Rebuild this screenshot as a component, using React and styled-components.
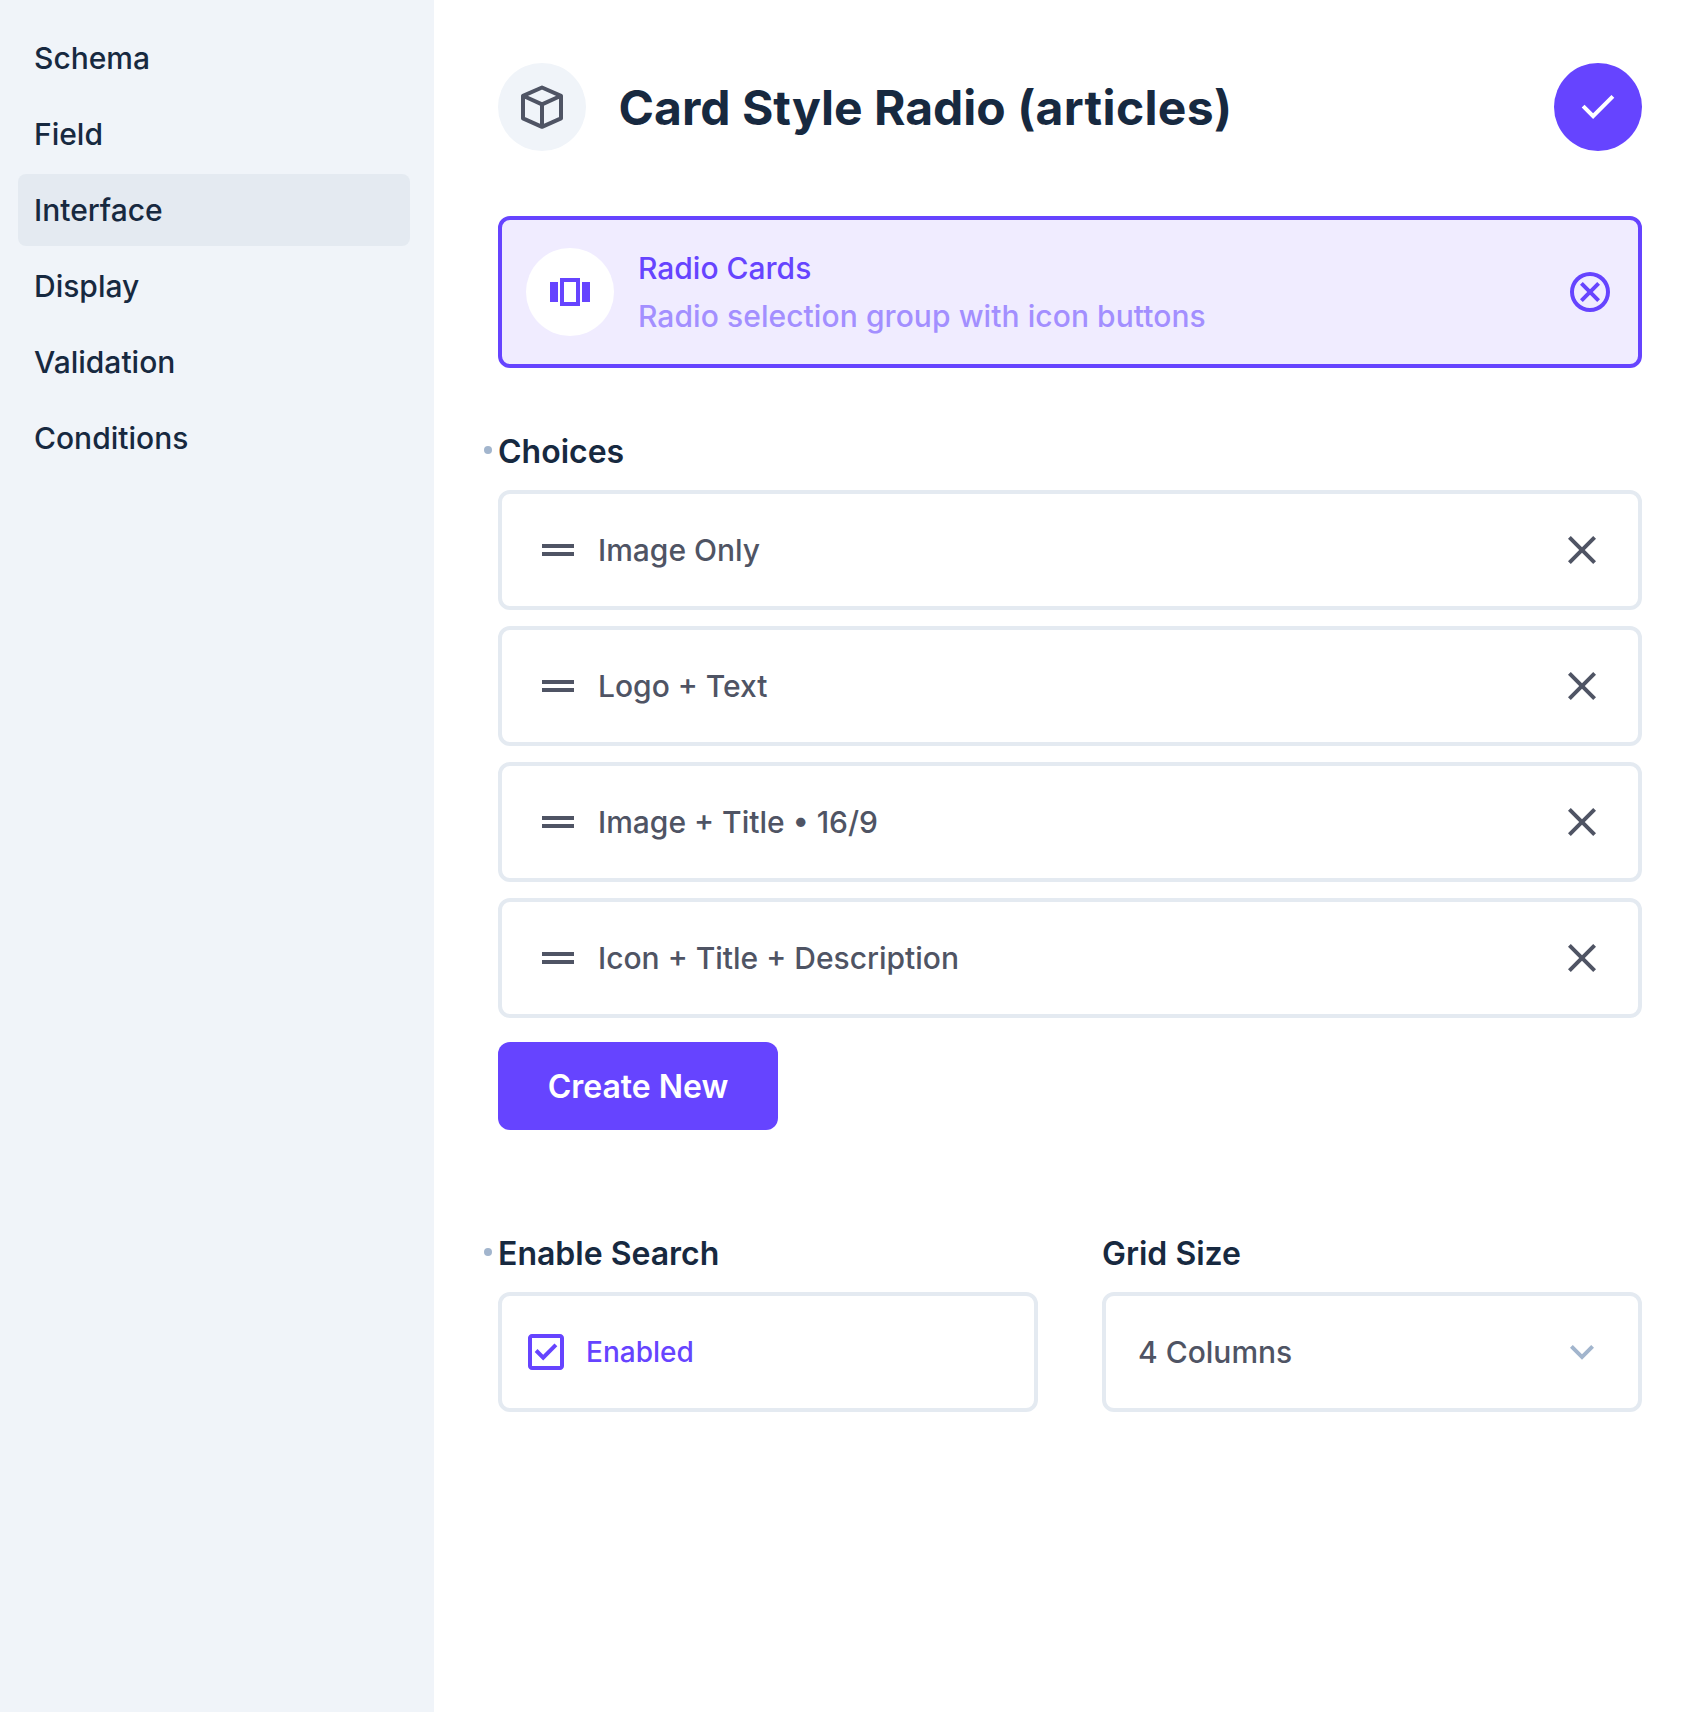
import React from "react";
import styled, { createGlobalStyle } from "styled-components";

const color = {
  primary: "#6644ff",
  primaryTint: "#f0ecff",
  primaryMuted: "#a38fff",
  heading: "#172940",
  text: "#4f5464",
  subtle: "#a2b5cd",
  border: "#e4eaf1",
  navActive: "#e4eaf1",
  panel: "#f0f4f9",
};

const GlobalStyle = createGlobalStyle`
  *, *::before, *::after { box-sizing: border-box; }
  body {
    margin: 0;
    background: #ffffff;
    color: ${color.text};
    font-family: Inter, "Liberation Sans", sans-serif;
    font-size: 30px;
    font-weight: 500;
    -webkit-font-smoothing: antialiased;
  }
`;

const Layout = styled.div`
  display: flex;
  min-height: 1712px;
`;

const Sidebar = styled.nav`
  flex: none;
  width: 434px;
  padding: 22px 24px 22px 18px;
  display: flex;
  flex-direction: column;
  gap: 4px;
  background: ${color.panel};
`;

const NavItem = styled.a`
  display: flex;
  align-items: center;
  height: 72px;
  padding: 0 16px;
  border-radius: 8px;
  color: ${color.heading};
  background: ${(p) => (p.$active ? color.navActive : "transparent")};
`;

const Main = styled.main`
  flex: 1;
  padding: 63px 60px 60px 64px;
`;

const Header = styled.header`
  display: flex;
  align-items: center;
  margin-bottom: 65px;
`;

const Title = styled.h1`
  flex: 1;
  margin: 0 0 0 32.5px;
  padding-top: 2px;
  color: ${color.heading};
  font-size: 48px;
  font-weight: 700;
  line-height: 60px;
`;

const Collection = styled.span`
  letter-spacing: 0.34px;
`;

const Round = styled.span`
  flex: none;
  display: flex;
  align-items: center;
  justify-content: center;
  width: 88px;
  height: 88px;
  border: 0;
  padding: 0;
  border-radius: 50%;
  color: ${(p) => p.$fg};
  background: ${(p) => p.$bg};
`;

const Svg = styled.svg`
  flex: none;
  display: block;
  width: 48px;
  height: 48px;
  fill: currentColor;
`;

const SelectedInterface = styled.section`
  display: flex;
  align-items: center;
  height: 152px;
  padding: 0 24px;
  border: 4px solid ${color.primary};
  border-radius: 12px;
  background: ${color.primaryTint};
  color: ${color.primary};
`;

const InterfaceText = styled.div`
  flex: 1;
  margin-left: 24px;
  line-height: 48px;
`;

const Description = styled.div`
  color: ${color.primaryMuted};
  letter-spacing: 0.07px;
`;

const Field = styled.section`
  margin-top: ${(p) => p.$top || 0}px;
`;

const Label = styled.h2`
  position: relative;
  margin: 0 0 18px;
  color: ${color.heading};
  font-size: 32px;
  font-weight: 600;
  line-height: 40px;
`;

const EditedDot = styled.span`
  position: absolute;
  left: -14px;
  top: 14px;
  width: 8px;
  height: 8px;
  border-radius: 50%;
  background: ${color.subtle};
`;

const ChoiceList = styled.div`
  display: grid;
  gap: 16px;
`;

const Box = styled.div`
  display: flex;
  align-items: center;
  height: 120px;
  padding: 0 32px;
  padding-left: ${(p) => p.$left ?? 32}px;
  border: 4px solid ${color.border};
  border-radius: 12px;
`;

const BoxText = styled.span`
  flex: 1;
  margin-left: ${(p) => p.$gap ?? 0}px;
  font-size: ${(p) => p.$size ?? 30}px;
`;

const Tinted = styled.span`
  display: flex;
  color: ${(p) => p.$fg};
`;

const CreateButton = styled.button`
  display: block;
  width: 280px;
  height: 88px;
  margin-top: 24px;
  padding: 0;
  border: 0;
  border-radius: 12px;
  background: ${color.primary};
  color: #ffffff;
  font: inherit;
  font-size: 32px;
  font-weight: 600;
`;

const FieldGrid = styled.div`
  display: grid;
  grid-template-columns: 1fr 1fr;
  gap: 64px;
  margin-top: 104px;
`;

const paths = {
  check: "m9.55 18-5.7-5.7 1.425-1.425L9.55 15.15l9.175-9.175L20.15 7.4z",
  carousel: "M2 17V7h4v10zm5 2V5h10v14zm11-2V7h4v10zM9 17h6V7H9z",
  cancel:
    "m8.4 17 3.6-3.6 3.6 3.6 1.4-1.4-3.6-3.6L17 8.4 15.6 7 12 10.6 8.4 7 7 8.4l3.6 3.6L7 15.6zM12 22a10 10 0 1 1 0-20 10 10 0 0 1 0 20zm0-2a8 8 0 1 0 0-16 8 8 0 0 0 0 16z",
  drag: "M4 15v-2h16v2zm0-4V9h16v2z",
  close:
    "M6.4 19 5 17.6l5.6-5.6L5 6.4 6.4 5l5.6 5.6L17.6 5 19 6.4 13.4 12l5.6 5.6-1.4 1.4-5.6-5.6z",
  checkbox:
    "m10.6 16.2 7.05-7.05-1.4-1.4-5.65 5.65-2.85-2.85-1.4 1.4zM5 21q-.825 0-1.412-.587A1.93 1.93 0 0 1 3 19V5q0-.825.588-1.413A1.93 1.93 0 0 1 5 3h14q.825 0 1.413.587Q21 4.176 21 5v14q0 .825-.587 1.413A1.93 1.93 0 0 1 19 21zm0-2h14V5H5z",
  expand: "M12 15.9l-6-6 1.4-1.4 4.6 4.6 4.6-4.6 1.4 1.4z",
};

const Icon = ({ name }) => (
  <Svg viewBox="0 0 24 24" aria-hidden="true">
    <path fillRule="evenodd" d={paths[name]} />
  </Svg>
);

const BoxIcon = () => (
  <Svg viewBox="0 0 24 24" aria-hidden="true">
    <path
      d="M12 2.25 21.5 6.4v11.3L12 21.9 2.5 17.7V6.4zM2.5 6.4 12 10.7l9.5-4.3M12 10.7v11.2"
      fill="none"
      stroke="currentColor"
      strokeWidth="2"
      strokeLinejoin="round"
    />
  </Svg>
);

const sections = ["Schema", "Field", "Interface", "Display", "Validation", "Conditions"];
const choices = ["Image Only", "Logo + Text", "Image + Title • 16/9", "Icon + Title + Description"];

export default function App() {
  return (
    <>
      <GlobalStyle />
      <Layout>
        <Sidebar>
          {sections.map((s) => (
            <NavItem key={s} $active={s === "Interface"}>{s}</NavItem>
          ))}
        </Sidebar>
        <Main>
          <Header>
            <Round $bg={color.panel} $fg={color.text}><BoxIcon /></Round>
            <Title>Card Style Radio <Collection>(articles)</Collection></Title>
            <Round as="button" aria-label="Save" $bg={color.primary} $fg="#ffffff">
              <Icon name="check" />
            </Round>
          </Header>
          <SelectedInterface>
            <Round $bg="#ffffff" $fg={color.primary}><Icon name="carousel" /></Round>
            <InterfaceText>
              <div>Radio Cards</div>
              <Description>Radio selection group with icon buttons</Description>
            </InterfaceText>
            <Icon name="cancel" />
          </SelectedInterface>
          <Field $top={64}>
            <Label><EditedDot />Choices</Label>
            <ChoiceList>
              {choices.map((c) => (
                <Box key={c}>
                  <Icon name="drag" />
                  <BoxText $gap={16}>{c}</BoxText>
                  <Icon name="close" />
                </Box>
              ))}
            </ChoiceList>
            <CreateButton>Create New</CreateButton>
          </Field>
          <FieldGrid>
            <Field>
              <Label><EditedDot />Enable Search</Label>
              <Box $left={20}>
                <Tinted $fg={color.primary}><Icon name="checkbox" /></Tinted>
                <Tinted $fg={color.primary}><BoxText $gap={16} $size={28}>Enabled</BoxText></Tinted>
              </Box>
            </Field>
            <Field>
              <Label>Grid Size</Label>
              <Box>
                <BoxText>4 Columns</BoxText>
                <Tinted $fg={color.subtle}><Icon name="expand" /></Tinted>
              </Box>
            </Field>
          </FieldGrid>
        </Main>
      </Layout>
    </>
  );
}
